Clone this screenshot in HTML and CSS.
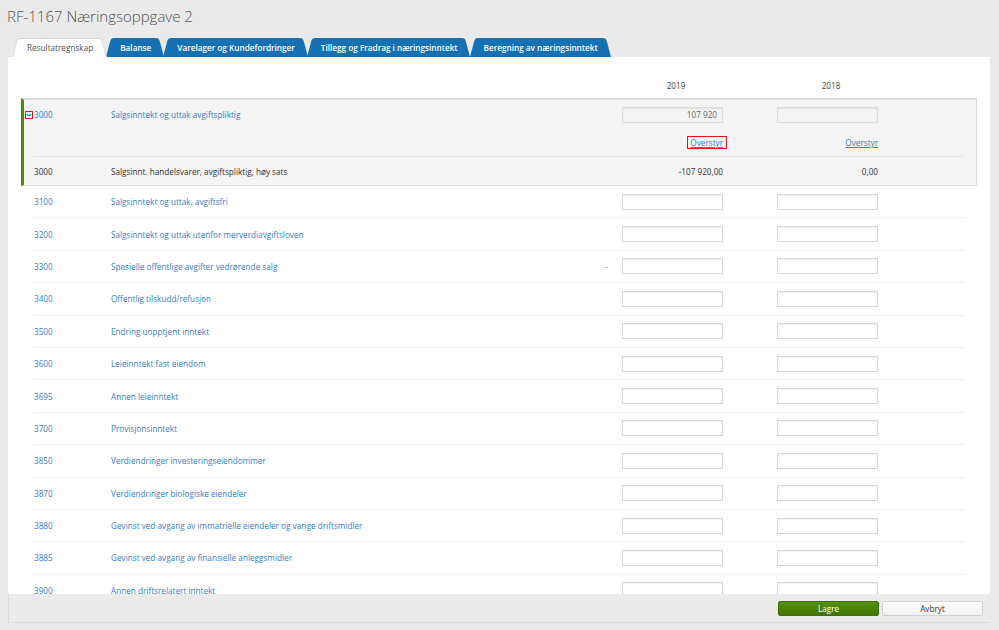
FILE: index.html
```html
<!DOCTYPE html>
<html lang="no">
<head>
    <meta charset="UTF-8">
    <title>RF-1167 Næringsoppgave 2</title>
    <link rel="stylesheet" href="styles.css">
</head>
<body>
    <h1 class="page-title">RF-1167 Næringsoppgave 2</h1>

    <div class="tabs">
        <a class="tab active">Resultatregnskap</a>
        <a class="tab">Balanse</a>
        <a class="tab">Varelager og Kundefordringer</a>
        <a class="tab">Tillegg og Fradrag i næringsinntekt</a>
        <a class="tab">Beregning av næringsinntekt</a>
    </div>

    <div class="panel">
        <div class="panel-body">
            <div class="grid head">
                <span></span><span></span><span></span>
                <span class="year">2019</span>
                <span></span>
                <span class="year">2018</span>
            </div>

            <!-- Utvidet post med underposter -->
            <div class="group">
                <div class="grid line top">
                    <a class="code"><span class="toggle"><svg viewBox="0 0 6 6" width="6" height="6"><path d="M1 2 L3 4 L5 2" fill="none" stroke="#3a80c3" stroke-width="1.2"/></svg></span>3000</a>
                    <a class="label">Salgsinntekt og uttak avgiftspliktig</a>
                    <span></span>
                    <input class="amount locked" type="text" value="107 920" readonly>
                    <span></span>
                    <input class="amount locked" type="text" readonly>
                </div>
                <div class="grid line links">
                    <span></span><span></span><span></span>
                    <span class="link-cell"><a class="override marked">Overstyr</a></span>
                    <span></span>
                    <span class="link-cell"><a class="override">Overstyr</a></span>
                </div>
                <div class="grid line sub">
                    <span class="code">3000</span>
                    <span class="label">Salgsinnt. handelsvarer, avgiftspliktig, høy sats</span>
                    <span></span>
                    <span class="sum">-107 920,00</span>
                    <span></span>
                    <span class="sum">0,00</span>
                </div>
            </div>

            <div class="grid row">
                <a class="code">3100</a><a class="label">Salgsinntekt og uttak, avgiftsfri</a><span></span>
                <input class="amount" type="text"><span></span><input class="amount" type="text">
            </div>
            <div class="grid row">
                <a class="code">3200</a><a class="label">Salgsinntekt og uttak utenfor merverdiavgiftsloven</a><span></span>
                <input class="amount" type="text"><span></span><input class="amount" type="text">
            </div>
            <div class="grid row">
                <a class="code">3300</a><a class="label">Spesielle offentlige avgifter vedrørende salg</a><span class="dash">-</span>
                <input class="amount" type="text"><span></span><input class="amount" type="text">
            </div>
            <div class="grid row">
                <a class="code">3400</a><a class="label">Offentlig tilskudd/refusjon</a><span></span>
                <input class="amount" type="text"><span></span><input class="amount" type="text">
            </div>
            <div class="grid row">
                <a class="code">3500</a><a class="label">Endring uopptjent inntekt</a><span></span>
                <input class="amount" type="text"><span></span><input class="amount" type="text">
            </div>
            <div class="grid row">
                <a class="code">3600</a><a class="label">Leieinntekt fast eiendom</a><span></span>
                <input class="amount" type="text"><span></span><input class="amount" type="text">
            </div>
            <div class="grid row">
                <a class="code">3695</a><a class="label">Annen leieinntekt</a><span></span>
                <input class="amount" type="text"><span></span><input class="amount" type="text">
            </div>
            <div class="grid row">
                <a class="code">3700</a><a class="label">Provisjonsinntekt</a><span></span>
                <input class="amount" type="text"><span></span><input class="amount" type="text">
            </div>
            <div class="grid row">
                <a class="code">3850</a><a class="label">Verdiendringer investeringseiendommer</a><span></span>
                <input class="amount" type="text"><span></span><input class="amount" type="text">
            </div>
            <div class="grid row">
                <a class="code">3870</a><a class="label">Verdiendringer biologiske eiendeler</a><span></span>
                <input class="amount" type="text"><span></span><input class="amount" type="text">
            </div>
            <div class="grid row">
                <a class="code">3880</a><a class="label">Gevinst ved avgang av immatrielle eiendeler og varige driftsmidler</a><span></span>
                <input class="amount" type="text"><span></span><input class="amount" type="text">
            </div>
            <div class="grid row">
                <a class="code">3885</a><a class="label">Gevinst ved avgang av finansielle anleggsmidler</a><span></span>
                <input class="amount" type="text"><span></span><input class="amount" type="text">
            </div>
            <div class="grid row">
                <a class="code">3900</a><a class="label">Annen driftsrelatert inntekt</a><span></span>
                <input class="amount" type="text"><span></span><input class="amount" type="text">
            </div>
        </div>

        <div class="panel-footer">
            <button class="btn btn-save">Lagre</button>
            <button class="btn btn-cancel">Avbryt</button>
        </div>
    </div>
</body>
</html>
```

FILE: styles.css
```css
* {
    margin: 0;
    padding: 0;
    box-sizing: border-box;
}

body {
    font-family: 'Open Sans', 'Liberation Sans', sans-serif;
    font-size: 8.2px;
    background: #eaeaea;
    color: #333;
    padding: 0 9px 0 8px;
    height: 630px;
    overflow: hidden;
}

.page-title {
    font-size: 15px;
    font-weight: 300;
    color: #555;
    line-height: 22px;
    padding-top: 5px;
    margin-left: -1px;
    height: 38px;
}

/* Faner */
.tabs {
    display: flex;
    height: 19px;
    padding-left: 4px;
}

.tab {
    position: relative;
    z-index: 0;
    padding: 0 13px 0 14px;
    margin-right: -1px;
    line-height: 19px;
    font-weight: 600;
    color: #fff;
    white-space: nowrap;
    cursor: pointer;
}

.tab::before,
.tab::after {
    content: '';
    position: absolute;
    top: 0;
    bottom: 0;
    width: 60%;
    background: #1571b4;
    z-index: -1;
    border-radius: 3px 3px 0 0;
}

.tab::before {
    left: 0;
    transform: skewX(-15deg);
    transform-origin: bottom left;
}

.tab::after {
    right: 0;
    transform: skewX(15deg);
    transform-origin: bottom right;
}

.tab.active {
    color: #555;
    font-weight: 400;
    z-index: 2;
    padding: 0 14px 0 15px;
}

.tab.active::before,
.tab.active::after {
    background: #fff;
    border: 1px solid #d6d6d6;
    border-bottom: none;
}

.tab.active::before {
    border-right: none;
}

.tab.active::after {
    border-left: none;
}

/* Innhold */
.panel {
    position: relative;
    z-index: 1;
}

.panel-body {
    background: #fff;
    height: 537px;
    overflow: hidden;
    padding: 0 13px;
}

.grid {
    display: grid;
    grid-template-columns: 78px 489px 22px 101px 54px 101px 1fr;
    align-items: center;
}

.head {
    margin: 0 13px 0 12px;
    padding: 22px 0 5px;
    line-height: 14px;
}

.year {
    text-align: center;
    padding-left: 7px;
    color: #444;
}

.code {
    padding-left: 1px;
    color: #3a80c3;
    position: relative;
}

.label {
    color: #3a80c3;
}

.dash {
    color: #3a80c3;
    text-align: right;
    padding-right: 14px;
}

.row {
    margin: 0 13px 0 12px;
    height: 32.4px;
    border-bottom: 1px solid #eee;
}

.row:first-of-type {
    margin-top: -1px;
}

.amount {
    width: 101px;
    height: 16px;
    border: 1px solid #d8d8d8;
    box-shadow: inset 0 1px 1px rgba(0, 0, 0, 0.06);
    background: #fff;
    font-family: inherit;
    font-size: 8.2px;
    color: #666;
    text-align: right;
    padding: 0 5px;
    outline: none;
}

/* Utvidet gruppe */
.group {
    background: #f4f4f4;
    border: 1px solid #dedede;
    border-top: 2px solid #dadada;
    border-left: 3px solid #4e8a0e;
    padding: 0 12px 0 9px;
}

.line.top {
    height: 29px;
}

.line.links {
    height: 28px;
    border-bottom: 1px solid #e4e4e4;
}

.line.sub {
    height: 28px;
}

.line.sub .code,
.line.sub .label {
    color: #333;
}

.amount.locked {
    background: #f4f4f4;
    border-color: #dcdcdc;
}

.toggle {
    position: absolute;
    left: -8px;
    top: 50%;
    margin-top: -4px;
    width: 8px;
    height: 8px;
    border: 1px solid #e8131b;
    background: #fff;
    display: flex;
    align-items: center;
    justify-content: center;
}

.link-cell,
.sum {
    text-align: right;
}

.override {
    color: #3a80c3;
    text-decoration: underline;
    cursor: pointer;
}

.override.marked {
    display: inline-block;
    border: 1px solid #e0141e;
    padding: 0 3px 0 2px;
    margin-right: -4px;
    line-height: 11px;
}

/* Knapperad */
.panel-footer {
    height: 29px;
    background: #ebebeb;
    border-left: 1px solid #dcdcdc;
    border-bottom: 1px solid #dcdcdc;
    display: flex;
    justify-content: flex-end;
    gap: 3px;
    padding: 7px 7px 0 0;
}

.btn {
    width: 101px;
    height: 15px;
    font-family: inherit;
    font-size: 8.2px;
    border-radius: 2px;
    cursor: pointer;
}

.btn-save {
    background: linear-gradient(#55900f, #3e7703);
    border: 1px solid #3b6f04;
    color: #fff;
}

.btn-cancel {
    background: linear-gradient(#ffffff, #f0f0f0);
    border: 1px solid #d2d2d2;
    color: #333;
}
```
